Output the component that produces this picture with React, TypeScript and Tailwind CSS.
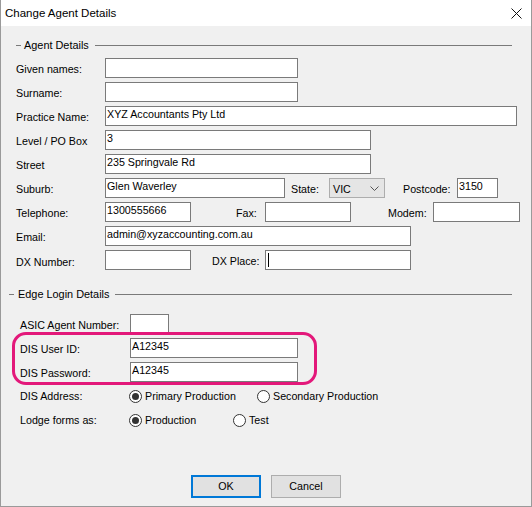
import React from "react";

function Box({ cls, value, caret }: { cls: string; value?: string; caret?: boolean }) {
  return (
    <div
      className={`h-[20px] shrink-0 border border-[#7a7a7a] bg-white pl-[1px] text-[10.7px] leading-[15px] text-black whitespace-nowrap overflow-hidden ${cls}`}
    >
      {caret ? <span className="inline-block w-[1px] h-[14px] bg-black mt-[2px] ml-[1px]" /> : value}
    </div>
  );
}

function Label({ cls, children }: { cls: string; children: React.ReactNode }) {
  return (
    <div className={`shrink-0 text-[10.7px] leading-[13px] pt-[2px] text-black whitespace-nowrap ${cls}`}>
      {children}
    </div>
  );
}

function Radio({ checked, label, cls }: { checked: boolean; label: string; cls: string }) {
  return (
    <div className={`flex items-center shrink-0 ${cls}`}>
      <div className="w-[13px] h-[13px] rounded-full border border-[#333333] bg-white flex items-center justify-center shrink-0">
        {checked && <div className="w-[7px] h-[7px] rounded-full bg-[#333333]" />}
      </div>
      <span className="ml-[3px] text-[10.7px] leading-[13px] text-black whitespace-nowrap">{label}</span>
    </div>
  );
}

function GroupHeader({ cls, dashCls, title }: { cls: string; dashCls: string; title: string }) {
  return (
    <div className={`flex items-center h-[13px] pr-[19px] ${cls}`}>
      <div className={`h-[1px] w-[5px] bg-[#7a7a7a] ${dashCls}`} />
      <span className="text-[10.9px] leading-[13px] text-black whitespace-nowrap">{title}</span>
      <div className="ml-[6px] h-[1px] flex-1 bg-[#7a7a7a]" />
    </div>
  );
}

export default function App() {
  return (
    <div className="font-['Liberation_Sans',Arial,sans-serif] w-[532px] h-[507px] bg-white">
      <div className="relative w-[532px] h-[507px] flex flex-col border-x border-b border-[#9a9a9a] bg-[#f0f0f0]">
        {/* Title bar */}
        <div className="h-[26px] bg-white flex items-center justify-between pl-[4px] pr-[9px] shrink-0">
          <span className="text-[11.5px] leading-[14px] text-black">Change Agent Details</span>
          <svg width="11" height="11" viewBox="0 0 11 11" className="mt-[1px]">
            <path d="M0.5 0.5 L10.5 10.5 M10.5 0.5 L0.5 10.5" stroke="#111" strokeWidth="1" fill="none" />
          </svg>
        </div>

        {/* Agent Details */}
        <GroupHeader cls="mt-[13px] pl-[15px]" dashCls="mr-[3px]" title="Agent Details" />

        <div className="mt-[6px] flex flex-col gap-[4px] pl-[15px]">
          <div className="flex items-center h-[20px]">
            <Label cls="w-[89px]">Given names:</Label>
            <Box cls="w-[193px]" />
          </div>
          <div className="flex items-center h-[20px]">
            <Label cls="w-[89px]">Surname:</Label>
            <Box cls="w-[193px]" />
          </div>
          <div className="flex items-center h-[20px]">
            <Label cls="w-[89px]">Practice Name:</Label>
            <Box cls="w-[412px]" value="XYZ Accountants Pty Ltd" />
          </div>
          <div className="flex items-center h-[20px]">
            <Label cls="w-[89px]">Level / PO Box</Label>
            <Box cls="w-[266px]" value="3" />
          </div>
          <div className="flex items-center h-[20px]">
            <Label cls="w-[89px]">Street</Label>
            <Box cls="w-[266px]" value="235 Springvale Rd" />
          </div>
          <div className="flex items-center h-[20px]">
            <Label cls="w-[89px]">Suburb:</Label>
            <Box cls="w-[180px]" value="Glen Waverley" />
            <Label cls="ml-[6px] w-[38px]">State:</Label>
            <div className="h-[20px] w-[56px] shrink-0 border border-[#adadad] bg-[#e5e5e5] flex items-center justify-between pl-[3px] pr-[5px]">
              <span className="text-[10.7px] leading-[13px] text-black pt-[2px]">VIC</span>
              <svg width="9" height="5" viewBox="0 0 9 5">
                <path d="M0.5 0.5 L4.5 4.5 L8.5 0.5" stroke="#555" strokeWidth="1" fill="none" />
              </svg>
            </div>
            <Label cls="ml-[18px] w-[54px]">Postcode:</Label>
            <Box cls="w-[41px]" value="3150" />
          </div>
          <div className="flex items-center h-[20px]">
            <Label cls="w-[89px]">Telephone:</Label>
            <Box cls="w-[86px]" value="1300555666" />
            <Label cls="ml-[45px] w-[29px]">Fax:</Label>
            <Box cls="w-[86px]" />
            <Label cls="ml-[37px] w-[45px]">Modem:</Label>
            <Box cls="w-[87px]" />
          </div>
          <div className="flex items-center h-[20px]">
            <Label cls="w-[89px]">Email:</Label>
            <Box cls="w-[306px]" value="admin@xyzaccounting.com.au" />
          </div>
          <div className="flex items-center h-[20px]">
            <Label cls="w-[89px] pt-[5px]">DX Number:</Label>
            <Box cls="w-[86px]" />
            <Label cls="ml-[21px] w-[53px]">DX Place:</Label>
            <Box cls="w-[146px]" caret />
          </div>
        </div>

        {/* Edge Login Details */}
        <GroupHeader cls="mt-[18px] pl-[8px]" dashCls="mr-[4px]" title="Edge Login Details" />

        <div className="mt-[13px] flex flex-col gap-[4px] pl-[19px]">
          <div className="flex items-center h-[20px]">
            <Label cls="w-[110px]">ASIC Agent Number:</Label>
            <Box cls="w-[39px]" />
          </div>
          <div className="flex items-center h-[20px]">
            <Label cls="w-[110px]">DIS User ID:</Label>
            <Box cls="w-[168px]" value="A12345" />
          </div>
          <div className="flex items-center h-[20px]">
            <Label cls="w-[110px]">DIS Password:</Label>
            <Box cls="w-[168px]" value="A12345" />
          </div>
          <div className="flex items-center h-[20px]">
            <Label cls="w-[109px] pb-[2px]">DIS Address:</Label>
            <Radio cls="w-[128px]" checked label="Primary Production" />
            <Radio cls="" checked={false} label="Secondary Production" />
          </div>
          <div className="flex items-center h-[20px]">
            <Label cls="w-[109px] pb-[2px]">Lodge forms as:</Label>
            <Radio cls="w-[104px]" checked label="Production" />
            <Radio cls="" checked={false} label="Test" />
          </div>
        </div>

        {/* Buttons */}
        <div className="mt-[45px] flex gap-[10px] pl-[190px]">
          <div className="w-[70px] h-[23px] border-2 border-[#0078d7] bg-[#e1e1e1] flex items-center justify-center text-[10.7px] leading-[13px] text-black">
            OK
          </div>
          <div className="w-[70px] h-[23px] border border-[#adadad] bg-[#e1e1e1] flex items-center justify-center text-[10.7px] leading-[13px] text-black">
            Cancel
          </div>
        </div>

        {/* Highlight annotation */}
        <div className="absolute left-[11px] top-[332px] w-[305px] h-[53px] rounded-[14px] border-[3px] border-[#e3187a] pointer-events-none" />
      </div>
    </div>
  );
}
